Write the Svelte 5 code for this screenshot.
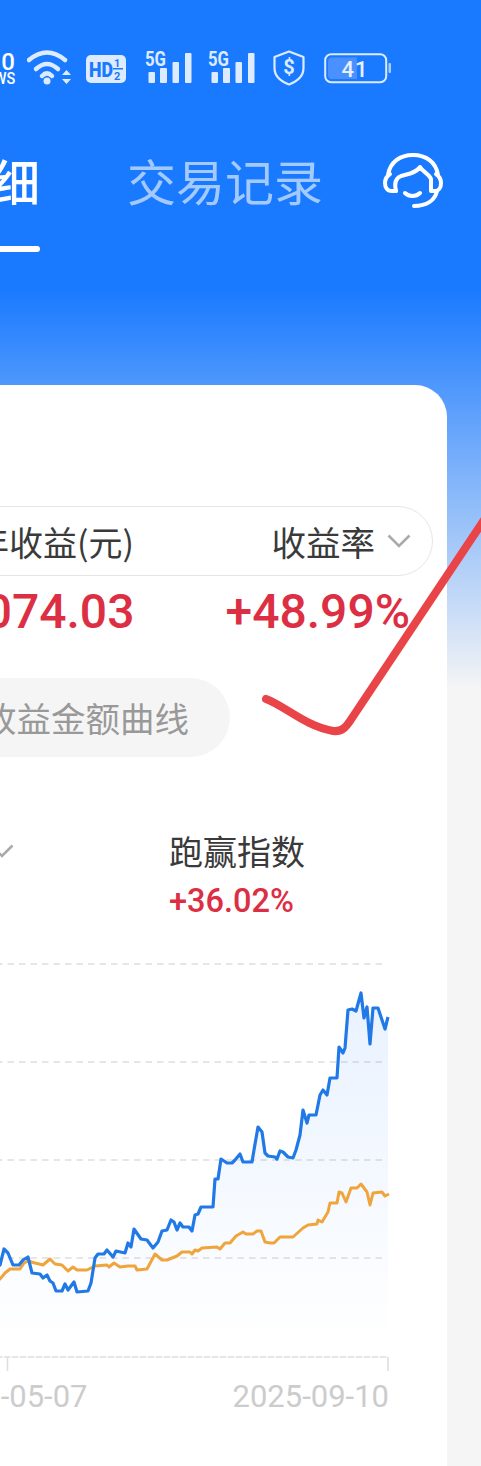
<script>
  const blue = [[-4,1262],[0,1265],[4,1249],[8,1253],[13,1265],[19,1265],[23,1260],[28,1257],[32,1273],[40,1274],[43,1278],[47,1275],[50,1281],[53,1283],[56,1291],[62,1291],[65,1284],[68,1290],[74,1282],[77,1292],[88,1291],[91,1283],[95,1258],[98,1254],[104,1254],[107,1250],[113,1257],[116,1251],[125,1253],[128,1243],[131,1247],[134,1229],[141,1239],[147,1240],[153,1248],[158,1242],[162,1231],[167,1230],[171,1220],[174,1222],[177,1230],[180,1223],[183,1227],[189,1227],[192,1231],[195,1215],[198,1214],[201,1207],[213,1207],[215,1179],[218,1179],[221,1159],[227,1163],[232,1163],[235,1160],[240,1154],[243,1162],[252,1162],[254,1150],[258,1127],[262,1132],[265,1153],[268,1156],[275,1157],[277,1159],[280,1151],[283,1152],[288,1157],[293,1158],[296,1150],[300,1135],[303,1110],[307,1123],[309,1115],[316,1115],[320,1095],[323,1090],[327,1095],[330,1078],[337,1078],[339,1047],[343,1053],[345,1048],[348,1010],[352,1009],[356,1011],[361,993],[364,1018],[367,1007],[370,1044],[373,1008],[378,1008],[385,1029],[388,1017]];
  const orange = [[-4,1282],[0,1279],[5,1273],[10,1269],[20,1269],[24,1263],[28,1261],[35,1263],[43,1265],[50,1259],[55,1264],[62,1265],[68,1271],[73,1267],[77,1270],[87,1270],[95,1266],[107,1265],[109,1267],[114,1263],[120,1267],[128,1266],[135,1266],[137,1270],[147,1269],[155,1254],[162,1260],[167,1260],[177,1256],[182,1252],[190,1252],[192,1254],[195,1250],[198,1251],[202,1248],[217,1247],[220,1249],[225,1243],[230,1243],[236,1236],[243,1232],[246,1234],[253,1234],[257,1231],[261,1231],[265,1242],[270,1243],[274,1243],[280,1237],[293,1237],[303,1228],[308,1225],[317,1224],[318,1220],[322,1222],[328,1212],[330,1203],[337,1203],[339,1192],[342,1193],[346,1202],[351,1188],[357,1188],[361,1184],[367,1192],[370,1205],[373,1193],[382,1192],[385,1196],[389,1194]];
  const toLine = (pts) => pts.map((p) => p.join(",")).join(" ");
  const areaPts = toLine(blue) + " 388,1357 -4,1357";
  const gridY = [964, 1062, 1160, 1258];
</script>

<div class="page">
  <!-- status bar -->
  <div class="status">
    <div class="speed"><span class="speed-num">0</span><span class="speed-unit">WS</span></div>

    <svg class="wifi" width="45" height="36" viewBox="27 50 45 36">
      <g fill="none" stroke="#dcebff" stroke-width="4.5" stroke-linecap="round">
        <path d="M29 60 Q47 45 65 60" />
        <path d="M36 69 Q47 59 58 69" />
        <path d="M42 76 Q47 71 52 76" />
      </g>
      <circle cx="47" cy="81" r="3.5" fill="#dcebff" />
      <path d="M62 75 L66.5 70 L71 75 Z M62 79 H71 L66.5 84 Z" fill="#dcebff" />
    </svg>

    <svg class="hd" width="40" height="28" viewBox="0 0 40 28">
      <rect width="40" height="28" rx="5" fill="#dcebff" />
      <text x="3" y="22" class="hd-main" textLength="24" lengthAdjust="spacingAndGlyphs">HD</text>
      <text x="28" y="12" class="hd-sub">1</text>
      <text x="28" y="25" class="hd-sub">2</text>
      <rect x="27" y="13" width="10" height="1.5" fill="#1a7aff" />
    </svg>

    {#each [0, 1] as sim}
      <svg class="signal" class:second={sim === 1} width="47" height="34" viewBox="145 50 47 34">
        <text x="145" y="66" class="five-g" textLength="21" lengthAdjust="spacingAndGlyphs">5G</text>
        <g fill="#dcebff">
          <rect x="148.5" y="72" width="6.5" height="11" rx="1" />
          <rect x="160" y="68" width="7" height="15" rx="1" />
          <rect x="172.5" y="62" width="6.5" height="21" rx="1" />
          <rect x="185" y="53" width="6.5" height="30" rx="1" />
        </g>
      </svg>
    {/each}

    <svg class="shield" width="32" height="36" viewBox="0 0 32 36">
      <path d="M16 1.5 L30.5 7 V18 C30.5 26 24 31.5 16 34.5 C8 31.5 1.5 26 1.5 18 V7 Z" fill="none" stroke="#dcebff" stroke-width="2.2" stroke-linejoin="round" />
      <text x="16" y="24" class="dollar" text-anchor="middle">$</text>
    </svg>

    <svg class="battery" width="67" height="32" viewBox="0 0 67 32">
      <rect x="1.2" y="1.2" width="61" height="28" rx="6" fill="none" stroke="#dcebff" stroke-width="2" />
      <path d="M8 4.5 H33 V26 H8 A4 4 0 0 1 4 22 V8.5 A4 4 0 0 1 8 4.5 Z" fill="#4a91ff" />
      <rect x="64.5" y="10" width="2.5" height="10" rx="1" fill="#a8ccff" />
      <text x="31" y="23.5" class="batt-num" text-anchor="middle">41</text>
    </svg>
  </div>

  <!-- tabs -->
  <div class="tabs">
    <div class="tab active">
      <span>持仓明细</span>
      <i class="tab-line"></i>
    </div>
    <div class="tab">交易记录</div>
    <svg class="service" width="60" height="55" viewBox="0 0 60 55">
      <g fill="none" stroke="#fff" stroke-width="4" stroke-linecap="round" stroke-linejoin="round">
        <path d="M5 22 C7 9 17 2 30 2 C43 2 53 9 55 22" />
        <path d="M13 38 H9 C4 38 2 34 2 30 C2 26 4 23 7 21" />
        <path d="M13 38 C11 30 13 25 18 23 C24 21 32 21 37 14 C40 19 46 21 48 26 V38 H52 C56 38 58 34 58 30 C58 26 56 23 53 21" />
        <path d="M54 38 C52 47 44 53 31 53" />
        <path d="M22 40 C26 44 33 44 37 40" />
      </g>
    </svg>
  </div>

  <!-- main card -->
  <div class="card">
    <div class="pill">
      <span>今年收益(元)</span>
      <span class="pill-right">
        收益率
        <svg width="24" height="14" viewBox="0 0 24 14">
          <path d="M1.5 1.5 L12 12 L22.5 1.5" fill="none" stroke="#aaa" stroke-width="2.6" />
        </svg>
      </span>
    </div>

    <div class="values">
      <span>+2,074.03</span>
      <span>+48.99%</span>
    </div>

    <div class="curve-btn">收益金额曲线</div>

    <div class="legend">
      <div class="legend-item first">
        <span class="legend-name">本产品
          <svg width="24" height="14" viewBox="0 0 24 14">
            <path d="M1.5 1.5 L12 12 L22.5 1.5" fill="none" stroke="#aaa" stroke-width="2.6" />
          </svg>
        </span>
      </div>
      <div class="legend-item">
        <span class="legend-name">跑赢指数</span>
        <span class="legend-val">+36.02%</span>
      </div>
    </div>

    <svg class="chart" width="400" height="416" viewBox="0 960 400 416">
      <defs>
        <linearGradient id="areaFill" gradientUnits="userSpaceOnUse" x1="0" y1="990" x2="0" y2="1345">
          <stop offset="0" stop-color="#1a7aff" stop-opacity="0.1" />
          <stop offset="1" stop-color="#1a7aff" stop-opacity="0" />
        </linearGradient>
      </defs>
      {#each gridY as y}
        <line x1="-4" x2="384" y1={y} y2={y} stroke="#e6e6e6" stroke-width="2" stroke-dasharray="6.5 5" />
      {/each}
      <line x1="-4" x2="388" y1="1357" y2="1357" stroke="#e6e6e6" stroke-width="2" stroke-dasharray="6.5 1.5" />
      <line x1="7.5" x2="7.5" y1="1357" y2="1371" stroke="#ddd" stroke-width="1.5" />
      <line x1="388" x2="388" y1="1357" y2="1371" stroke="#ddd" stroke-width="1.5" />
      <polygon points={areaPts} fill="url(#areaFill)" />
      <polyline points={toLine(orange)} fill="none" stroke="#f0a43c" stroke-width="3" stroke-linejoin="round" />
      <polyline points={toLine(blue)} fill="none" stroke="#2079e6" stroke-width="3.2" stroke-linejoin="round" />
    </svg>

    <div class="dates">
      <span>2025-05-07</span>
      <span>2025-09-10</span>
    </div>
  </div>

  <!-- hand drawn tick over the page -->
  <svg class="tick" width="481" height="800" viewBox="0 0 481 800">
    <path d="M266 699 C285 706 305 726 333 731 C342 732 346 727 350 721 L484 520" fill="none" stroke="#e94548" stroke-width="8" stroke-linecap="round" />
  </svg>
</div>

<style>
  :global(body) {
    margin: 0;
    background: #f5f5f5;
  }

  .page {
    position: relative;
    width: 481px;
    height: 1466px;
    overflow: hidden;
    display: flex;
    flex-direction: column;
    font-family: "Noto Sans CJK SC", "Noto Sans", sans-serif;
    background: linear-gradient(180deg, #1a7aff 0, #1a7aff 290px, #f5f5f5 690px);
  }

  /* --- status bar --- */
  .status {
    display: flex;
    align-items: flex-start;
    height: 136px;
    box-sizing: border-box;
    padding-top: 50px;
  }

  .speed {
    width: 15px;
    display: flex;
    flex-direction: column;
    align-items: flex-end;
    font-family: Roboto, sans-serif;
    color: #fff;
    line-height: 1;
  }

  .speed-num {
    font-size: 24px;
    font-weight: 500;
    height: 20px;
  }

  .speed-unit {
    font-size: 17px;
    font-weight: 500;
    transform: scaleX(0.85);
    transform-origin: right;
  }

  .wifi { margin-left: 12px; }
  .hd { margin-left: 14px; margin-top: 5px; }
  .signal { margin-left: 19px; }
  .signal.second { margin-left: 16px; }
  .shield { margin-left: 18px; }
  .battery { margin-left: 19px; margin-top: 3px; }

  .hd-main {
    font: 900 20px Roboto, sans-serif;
    fill: #1a7aff;
  }

  .hd-sub {
    font: 700 11px Roboto, sans-serif;
    fill: #1a7aff;
  }

  .five-g {
    font: 700 20px Roboto, sans-serif;
    fill: #dcebff;
  }

  .dollar {
    font: 700 20px Roboto, sans-serif;
    fill: #dcebff;
  }

  .batt-num {
    font: 500 22px Roboto, sans-serif;
    fill: #e6f0ff;
    letter-spacing: 1px;
  }

  /* --- tabs --- */
  .tabs {
    display: flex;
    align-items: flex-start;
    height: 249px;
    margin-left: -156px;
  }

  .tab {
    font-size: 49px;
    line-height: 88px;
    color: rgba(255, 255, 255, 0.6);
    white-space: nowrap;
    margin-left: 87px;
  }

  .tab.active {
    display: flex;
    flex-direction: column;
    align-items: center;
    margin-left: 0;
    color: #fff;
    font-weight: 500;
  }

  .tab-line {
    display: block;
    width: 196px;
    height: 6px;
    margin-top: 22px;
    border-radius: 3px;
    background: #fff;
  }

  .service {
    margin-left: 60px;
    margin-top: 17px;
    flex-shrink: 0;
  }

  /* --- card --- */
  .card {
    flex: 1;
    width: 527px;
    margin-left: -80px;
    box-sizing: border-box;
    padding: 121px 14px 0 0;
    background: #fff;
    border-radius: 0 32px 0 0;
  }

  .pill {
    display: flex;
    align-items: center;
    justify-content: space-between;
    height: 70px;
    box-sizing: border-box;
    padding: 0 21px 0 0;
    border: 1.5px solid #e6e6e6;
    border-radius: 35px;
    font-size: 34px;
    color: #3a3a3a;
    white-space: nowrap;
  }

  .pill > span:first-child {
    margin-left: 20px;
  }

  .pill-right {
    display: flex;
    align-items: center;
    gap: 12px;
    font-size: 34.5px;
  }

  .values {
    display: flex;
    justify-content: space-between;
    height: 72px;
    padding-right: 23px;
    font-family: Roboto, sans-serif;
    font-size: 48px;
    font-weight: 500;
    line-height: 72px;
    color: #dc2f44;
  }

  .curve-btn {
    width: 310px;
    height: 79px;
    margin-top: 30px;
    box-sizing: border-box;
    padding-left: 62px;
    border-radius: 40px;
    background: #f5f5f5;
    font-size: 34.5px;
    line-height: 79px;
    color: #999;
    white-space: nowrap;
  }

  .legend {
    display: flex;
    margin-top: 70px;
    height: 133px;
  }

  .legend-item {
    display: flex;
    flex-direction: column;
  }

  .legend-item.first {
    width: 249px;
    align-items: flex-end;
  }

  .legend-name {
    display: flex;
    align-items: center;
    gap: 8px;
    font-size: 34px;
    line-height: 48px;
    color: #3a3a3a;
    white-space: nowrap;
  }

  .legend-item.first svg {
    margin-right: 155px;
  }

  .legend-val {
    font-family: Roboto, sans-serif;
    font-size: 32.5px;
    font-weight: 500;
    line-height: 52px;
    color: #dc2f44;
  }

  .chart {
    display: block;
    margin-left: 80px;
    overflow: visible;
  }

  .dates {
    display: flex;
    justify-content: space-between;
    width: 458px;
    margin-left: 11px;
    margin-top: 1px;
    font-family: Roboto, sans-serif;
    font-size: 31px;
    line-height: 40px;
    color: #ccc;
  }

  .tick {
    position: absolute;
    top: 0;
    left: 0;
    pointer-events: none;
  }
</style>
